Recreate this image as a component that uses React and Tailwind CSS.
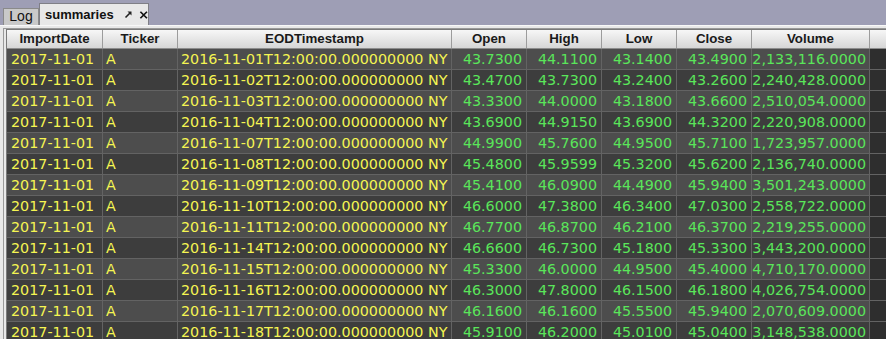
const rows = [
  ["2016-11-01", "43.7300", "44.1100", "43.1400", "43.4900", "2,133,116.0000"],
  ["2016-11-02", "43.4700", "43.7300", "43.2400", "43.2600", "2,240,428.0000"],
  ["2016-11-03", "43.3300", "44.0000", "43.1800", "43.6600", "2,510,054.0000"],
  ["2016-11-04", "43.6900", "44.9150", "43.6900", "44.3200", "2,220,908.0000"],
  ["2016-11-07", "44.9900", "45.7600", "44.9500", "45.7100", "1,723,957.0000"],
  ["2016-11-08", "45.4800", "45.9599", "45.3200", "45.6200", "2,136,740.0000"],
  ["2016-11-09", "45.4100", "46.0900", "44.4900", "45.9400", "3,501,243.0000"],
  ["2016-11-10", "46.6000", "47.3800", "46.3400", "47.0300", "2,558,722.0000"],
  ["2016-11-11", "46.7700", "46.8700", "46.2100", "46.3700", "2,219,255.0000"],
  ["2016-11-14", "46.6600", "46.7300", "45.1800", "45.3300", "3,443,200.0000"],
  ["2016-11-15", "45.3300", "46.0000", "44.9500", "45.4000", "4,710,170.0000"],
  ["2016-11-16", "46.3000", "47.8000", "46.1500", "46.1800", "4,026,754.0000"],
  ["2016-11-17", "46.1600", "46.1600", "45.5500", "45.9400", "2,070,609.0000"],
  ["2016-11-18", "45.9100", "46.2000", "45.0100", "45.0400", "3,148,538.0000"],
];

const columns = [
  { name: "ImportDate", w: "w-[96px]" },
  { name: "Ticker", w: "w-[75px]" },
  { name: "EODTimestamp", w: "w-[274px]" },
  { name: "Open", w: "w-[75px]" },
  { name: "High", w: "w-[75px]" },
  { name: "Low", w: "w-[75px]" },
  { name: "Close", w: "w-[75px]" },
  { name: "Volume", w: "w-[118px]" },
];

function UndockIcon() {
  return (
    <svg width="9" height="9" viewBox="0 0 9 9">
      <path d="M1.5 7.5 L6 3" stroke="#222" strokeWidth="1.6" />
      <path d="M3.5 1.5 H7.5 V5.5 Z" fill="#222" />
    </svg>
  );
}

function CloseIcon() {
  return (
    <svg width="10" height="10" viewBox="0 0 10 10">
      <path d="M1.5 1.5 L8.5 8.5 M8.5 1.5 L1.5 8.5" stroke="#111" strokeWidth="1.8" />
    </svg>
  );
}

export default function App() {
  return (
    <div className="w-[886px] h-[339px] overflow-hidden bg-[#9e9eb5] flex flex-col font-['Liberation_Sans',sans-serif]">
      {/* tab strip */}
      <div className="h-[25px] flex items-end pl-[3px] shrink-0">
        <div className="h-[17px] w-[36px] bg-[#c9c9c9] border border-b-0 border-[#8a8a8a] text-center text-[14px] leading-[15px] text-[#111]">
          Log
        </div>
        <div className="h-[22px] w-[110px] bg-[#e8e8e8] border border-b-0 border-[#7f7f86] flex items-center pl-[5px] gap-[6px] text-[13px] font-bold text-[#111] leading-none">
          <span>summaries</span>
          <span className="ml-[4px] flex items-center">
            <UndockIcon />
          </span>
          <CloseIcon />
        </div>
      </div>

      {/* panel */}
      <div className="flex-1 bg-[#e8e8e8] border-t border-[#f8f8f8] pt-[2px] pl-[3px] min-h-0">
        <div className="h-full border-l border-t border-[#9a9a9a] pl-[2px] bg-[#e8e8e8]">
          <div className="h-full bg-[#2e2e2e] border-l border-t border-[#7a7a7a] overflow-hidden">
            {/* header */}
            <div className="flex h-[19px] bg-gradient-to-b from-[#f7f7f7] to-[#d6d6d6] border-b border-[#8c8c8c]">
              {columns.map((c) => (
                <div
                  key={c.name}
                  className={`${c.w} shrink-0 border-r border-[#9c9c9c] flex items-center justify-center text-[13.3px] font-bold text-[#1a1a1a]`}
                >
                  {c.name}
                </div>
              ))}
              <div className="flex-1" />
            </div>

            {/* rows */}
            {rows.map((r, i) => (
              <div
                key={r[0]}
                className={`flex h-[21px] border-b border-[#636363] font-['DejaVu_Sans',sans-serif] text-[14.3px] leading-none ${
                  i % 2 === 0 ? "bg-[#4d4d4d]" : "bg-[#3d3d3d]"
                }`}
              >
                <div className="w-[96px] shrink-0 border-r border-[#636363] flex items-center pl-[4px] text-[#f5f552] whitespace-nowrap">
                  2017-11-01
                </div>
                <div className="w-[75px] shrink-0 border-r border-[#636363] flex items-center pl-[3px] text-[#f5f552]">
                  A
                </div>
                <div className="w-[274px] shrink-0 border-r border-[#636363] flex items-center pl-[3px] text-[#f5f552] whitespace-nowrap overflow-hidden">
                  {r[0]}T12:00:00.000000000 NY
                </div>
                {r.slice(1, 5).map((v, j) => (
                  <div
                    key={j}
                    className="w-[75px] shrink-0 border-r border-[#636363] flex items-center justify-end pr-[4px] text-[#5ae65a]"
                  >
                    {v}
                  </div>
                ))}
                <div className="w-[118px] shrink-0 border-r border-[#636363] flex items-center justify-end pr-[3px] text-[#5ae65a] whitespace-nowrap">
                  {r[5]}
                </div>
                <div className="flex-1 bg-[#2e2e2e]" />
              </div>
            ))}
          </div>
        </div>
      </div>
    </div>
  );
}
